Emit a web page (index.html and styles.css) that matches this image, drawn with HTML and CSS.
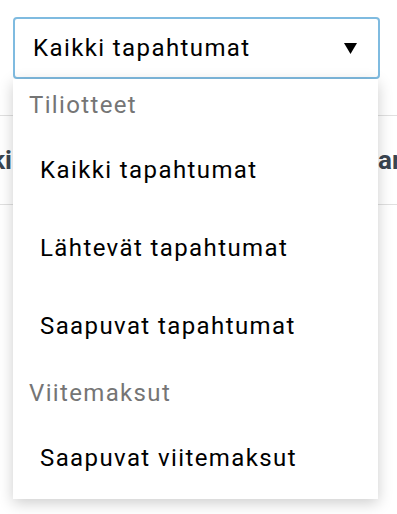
FILE: index.html
```html
<!DOCTYPE html>
<html lang="fi">
<head>
  <meta charset="UTF-8" />
  <meta name="viewport" content="width=device-width, initial-scale=1.0" />
  <title>Tapahtumat</title>
  <link rel="stylesheet" href="styles.css">
</head>
<body>
  <!-- Event type picker, open -->
  <div class="picker">
    <div class="select">
      <span>Kaikki tapahtumat</span>
      <svg class="arrow" width="13" height="11" viewBox="0 0 13 11">
        <polygon points="0,0 13,0 6.5,11" fill="#000" />
      </svg>
    </div>

    <ul class="menu">
      <li class="group">Tiliotteet</li>
      <li class="item">Kaikki tapahtumat</li>
      <li class="item">Lähtevät tapahtumat</li>
      <li class="item">Saapuvat tapahtumat</li>
      <li class="group">Viitemaksut</li>
      <li class="item">Saapuvat viitemaksut</li>
    </ul>
  </div>

  <!-- Tab bar behind the menu -->
  <div class="tabs">
    <div class="tab tab-left"><span>Kaikki</span></div>
    <div class="tab tab-mid"><span>Tapahtumat</span></div>
    <div class="tab tab-right"><span>arkisto</span></div>
  </div>
</body>
</html>
```

FILE: styles.css
```css
html, body {
  min-height: 100vh;
}
body {
  margin: 0;
  font-family: Roboto, "Noto Sans", sans-serif;
  background-color: #fff;
  color: #000;
}
.picker {
  position: relative;
  width: 367px;
  margin: 17px 0 0 13px;
  z-index: 2;
}
.select {
  display: flex;
  align-items: center;
  justify-content: space-between;
  height: 56px;
  padding: 1px 21px 1px 18px;
  border: 2px solid #7fbbe0;
  border-radius: 4px;
  font-size: 24px;
  line-height: 56px;
  letter-spacing: 1.4px;
}
.arrow {
  display: block;
  margin-top: 0;
}
.menu {
  position: absolute;
  top: 100%;
  left: 0;
  width: 365px;
  margin: 0;
  padding: 0;
  list-style: none;
  background-color: #fff;
  box-shadow: 0 4px 14px rgba(0, 0, 0, 0.2);
}
.group {
  padding: 11px 16px 13px;
  font-size: 24px;
  line-height: 30px;
  letter-spacing: 1.35px;
  color: #757575;
}
.item {
  padding: 22px 27px 26px;
  font-size: 24px;
  line-height: 30px;
  letter-spacing: 1.4px;
  color: #000;
}
.tabs {
  display: grid;
  grid-template-columns: 12px 1fr 19px;
  margin-top: 36px;
  border-top: 1px solid #e0e0e0;
  border-bottom: 1px solid #e0e0e0;
  font-size: 26px;
  font-weight: bold;
  line-height: 88px;
  color: #3a4550;
}
.tab {
  display: flex;
  overflow: hidden;
  white-space: nowrap;
}
.tab-left {
  justify-content: flex-end;
}
.tab-mid {
  justify-content: center;
}
```
